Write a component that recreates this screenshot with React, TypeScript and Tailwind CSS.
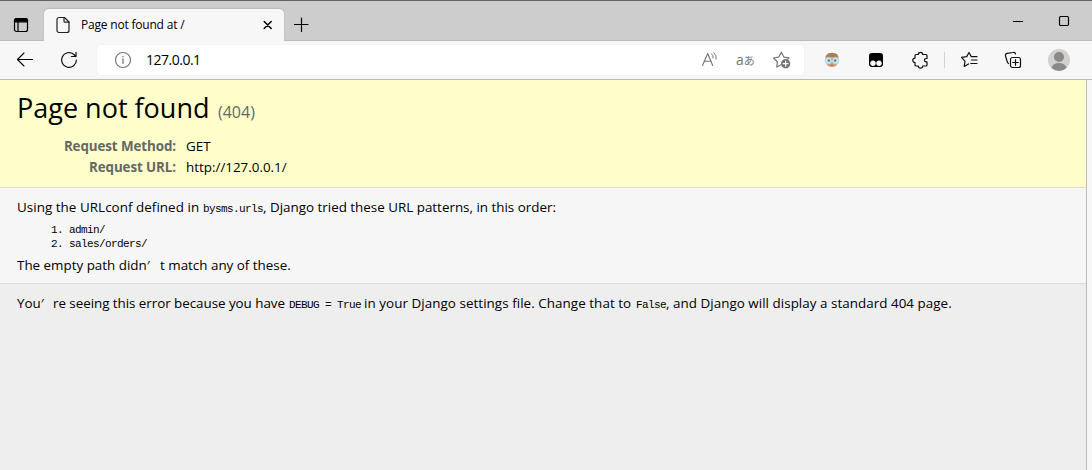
import React from "react";

type IconProps = { className?: string; children: React.ReactNode; size?: number };

function Icon({ className = "", children, size = 20 }: IconProps) {
  return (
    <svg
      width={size}
      height={size}
      viewBox={`0 0 ${size} ${size}`}
      fill="none"
      stroke="currentColor"
      strokeWidth="1.2"
      strokeLinecap="round"
      strokeLinejoin="round"
      className={`block shrink-0 ${className}`}
    >
      {children}
    </svg>
  );
}

function TabBar() {
  return (
    <div className="flex h-[41px] shrink-0 items-start border-t border-b border-t-[#656265] border-b-[#bbbbbb] bg-[#cdcdcd]">
      <Icon className="mt-[14px] ml-[11px] text-black">
        <rect x="3.5" y="3.5" width="13" height="13" rx="2" />
        <path d="M3.5 5.5a2 2 0 0 1 2-2h9a2 2 0 0 1 2 2v1.3h-13z" fill="currentColor" />
        <path d="M7 7v9.5" />
      </Icon>
      <div className="mt-2 ml-[13px] flex h-[32px] w-[240px] shrink-0 items-center rounded-t-[5px] bg-[#f7f7f7] shadow-[0_-1px_2px_rgba(0,0,0,0.12)]">
        <Icon className="ml-[9px] text-[#222]">
          <path d="M6 2.5h5.5l4.5 4.500v8.500a2 2 0 0 1-2 2H6a2 2 0 0 1-2-2v-11a2 2 0 0 1 2-2z" />
          <path d="M11 2.700v3.500a1 1 0 0 0 1 1h4" />
        </Icon>
        <span className="ml-2 w-[160px] whitespace-nowrap text-[12px] tracking-[-0.2px]">Page not found at /</span>
        <Icon className="ml-[17px] text-black">
          <path d="M6.200 6.500l7 7M13.200 6.500l-7 7" strokeWidth="1.500" />
        </Icon>
      </div>
      <Icon className="mt-[14px] ml-[7px] text-black">
        <path d="M10.500 3v13.500M3.500 9.500h13.500" />
      </Icon>
      <div className="ml-auto mr-[18px] mt-[10px] flex gap-[26px]">
        <Icon className="text-black">
          <path d="M5 10.500h10" strokeLinecap="butt" strokeWidth="1" />
        </Icon>
        <Icon className="text-black">
          <rect x="5.500" y="5.500" width="9" height="9" rx="1.200" />
        </Icon>
      </div>
    </div>
  );
}

function Toolbar() {
  return (
    <div className="flex h-[38px] shrink-0 items-center bg-[#f7f7f7]">
      <Icon className="ml-[15px] text-black">
        <path d="M17.500 9.500H2.500M9 3L2.500 9.500L9 16" strokeWidth="1.1" />
      </Icon>
      <Icon className="ml-[24px] text-[#111]">
        <path d="M17.400 10a7.400 7.400 0 1 1-2.800-5.800L17 6.500M17 2.300v4.200h-4.600" />
      </Icon>
      <div className="ml-[18px] flex h-[30px] w-[707px] shrink-0 items-center rounded-[4px] bg-white shadow-[0_0_2px_rgba(0,0,0,0.06)]">
        <Icon className="ml-4 text-[#777]">
          <circle cx="10" cy="10" r="7.500" />
          <path d="M10 9v4.500M10 6.300v.5" strokeWidth="1.300" />
        </Icon>
        <span className="ml-[13px] text-[14px] leading-5 tracking-[-0.5px]">127.0.0.1</span>
        <div className="ml-auto mr-[12px] flex items-center gap-4 text-[#747474]">
          <Icon>
            <path d="M2.500 15.500L7.700 3.500L12.700 15.500M4.200 11.300h6.900" strokeWidth="1.100" />
            <path d="M11.500 3.800q2 1.600 1.700 4.200M13.800 2.700q3.200 2.500 2.400 6.300" strokeWidth="1" />
          </Icon>
          <span className="flex w-5 items-center leading-5">
            <span className="text-[14px] leading-5">a</span>
            <span className="-mt-px font-['Noto_Sans_CJK_JP',sans-serif] text-[11px] leading-5">あ</span>
          </span>
          <Icon>
            <path d="M8.500 15L4.700 17L5.400 11.700L1.500 8L6.800 7.100L9.300 2.200L11.800 7.100L17 7.900L15.600 9.400" />
            <circle cx="13.600" cy="13.700" r="4.700" fill="currentColor" stroke="none" />
            <path d="M13.600 11.200v5M11.100 13.700h5" stroke="white" />
          </Icon>
        </div>
      </div>
      <Icon className="ml-[18px]">
        <circle cx="10" cy="10.500" r="6.600" fill="#d89f7c" stroke="none" />
        <path d="M3.500 9Q3 3 9.500 2.800Q17 2.500 16.500 9L13.500 7L6.500 7z" fill="#a98053" stroke="none" />
        <circle cx="6.300" cy="10.700" r="3" fill="#d7f1f4" stroke="#b5d5d8" />
        <circle cx="13.700" cy="10.700" r="3" fill="#d7f1f4" stroke="#b5d5d8" />
        <circle cx="6.800" cy="10.500" r="1.200" fill="#397f94" stroke="none" />
        <circle cx="13.200" cy="10.500" r="1.200" fill="#397f94" stroke="none" />
        <path d="M8.500 15h3" stroke="#b5705d" />
      </Icon>
      <Icon className="ml-6">
        <rect x="3" y="3" width="14" height="14" rx="3" fill="black" stroke="none" />
        <circle cx="7" cy="13.200" r="2.700" fill="white" stroke="none" />
        <circle cx="13" cy="13.200" r="2.700" fill="white" stroke="none" />
      </Icon>
      <Icon className="ml-6 text-[#111]">
        <path d="M6 4.500h2.300a2.200 2.200 0 0 1 4.400 0H16a1 1 0 0 1 1 1v3h-.8a1.700 1.700 0 0 0 0 3.400h.8V15a1 1 0 0 1-1 1h-3.300a2.200 2.200 0 0 1-4.400 0H6a1 1 0 0 1-1-1v-2.500a2.200 2.200 0 0 1 0-4.400V5.500a1 1 0 0 1 1-1z" />
      </Icon>
      <div className="ml-[14px] h-4 w-px bg-[#d0d0d0]" />
      <Icon className="ml-[15px] text-[#111]">
        <path d="M8.500 14L4.200 16.400L5 11.200L1.500 7.400L6.700 6.600L9 2.500L11.300 6.600H17" />
        <path d="M11.500 10H17M10.800 13.500H17" />
      </Icon>
      <Icon className="ml-[24px] text-[#111]">
        <path d="M4.500 13.500Q3.500 13 3 11L1.500 6Q1 4 3 3.400L9 2.500Q11 2 11.500 4" />
        <rect x="6.500" y="7.500" width="10" height="10" rx="2" />
        <path d="M11.500 9.700v5.600M8.700 12.500h5.600" />
      </Icon>
      <Icon size={22} className="ml-[24px]">
        <circle cx="11" cy="11" r="11" fill="#d2d0ce" stroke="none" />
        <circle cx="11" cy="8" r="5" fill="#8c8886" stroke="none" />
        <path d="M3.500 19Q5 14 11 14T18.500 19Q11 25 3.500 19z" fill="#8c8886" stroke="none" />
      </Icon>
    </div>
  );
}

function Code({ children }: { children: React.ReactNode }) {
  return (
    <code className="shrink-0 font-['Liberation_Mono',monospace] text-[11px] tracking-[-0.6px]">{children}</code>
  );
}

function Page() {
  return (
    <div className="flex min-h-0 flex-1 border-t border-[#bbbbbb] bg-[#f7f7f7]">
      <main className="flex w-[1087px] flex-col border-r border-[#bbbbbb] bg-[#eeeeee] text-[13.4px]">
        <header className="h-[108px] border-b border-[#dddddd] bg-[#ffffcc] pl-[17px]">
          <h1 className="flex h-[56px] items-baseline pt-[8px] text-[27px] leading-[40px] whitespace-nowrap">
            <span className="w-[201px] shrink-0">Page not found</span>
            <span className="text-[16px] text-[#666666]">(404)</span>
          </h1>
          <dl className="grid grid-cols-[159px_1fr] gap-x-[10px] leading-[21px]">
            <dt className="text-right font-bold tracking-[-0.1px] text-[#666666]">Request Method:</dt>
            <dd>GET</dd>
            <dt className="text-right font-bold tracking-[-0.1px] text-[#666666]">Request URL:</dt>
            <dd>http://127.0.0.1/</dd>
          </dl>
        </header>
        <section className="h-[96px] border-b border-[#dddddd] bg-[#f6f6f6] pt-[9px] pl-[17px]">
          <p className="flex h-[26px] items-baseline leading-[20px] whitespace-nowrap">
            <span className="w-[186px] shrink-0 tracking-[0.05px]">Using the URLconf defined in</span>
            <Code>bysms.urls</Code>
            <span>, Django tried these URL patterns, in this order:</span>
          </p>
          <ol className="h-[28px] font-['Liberation_Mono',monospace] text-[11px] leading-[14px] tracking-[-0.6px]">
            <li className="ml-[34px] flex gap-[6px]"><span>1.</span><span>admin/</span></li>
            <li className="ml-[34px] flex gap-[6px]"><span>2.</span><span>sales/orders/</span></li>
          </ol>
          <p className="flex pt-[4px] leading-[20px] whitespace-nowrap">
            <span className="w-[143px] shrink-0">The empty path didn′</span>
            <span>t match any of these.</span>
          </p>
        </section>
        <footer className="pt-[9px] pl-[17px]">
          <p className="flex items-baseline leading-[20px] whitespace-nowrap">
            <span className="w-[36px] shrink-0">You′</span>
            <span className="w-[236px] shrink-0 tracking-[-0.04px]">re seeing this error because you have</span>
            <span className="w-[75px] shrink-0"><Code>DEBUG = True</Code></span>
            <span className="w-[272px] shrink-0 tracking-[0.06px]">in your Django settings file. Change that to</span>
            <Code>False</Code>
            <span className="tracking-[0.04px]">, and Django will display a standard 404 page.</span>
          </p>
        </footer>
      </main>
    </div>
  );
}

export default function App() {
  return (
    <div className="flex h-[470px] w-[1092px] flex-col overflow-hidden bg-[#f7f7f7] font-['Open_Sans',sans-serif] text-black">
      <TabBar />
      <Toolbar />
      <Page />
    </div>
  );
}
